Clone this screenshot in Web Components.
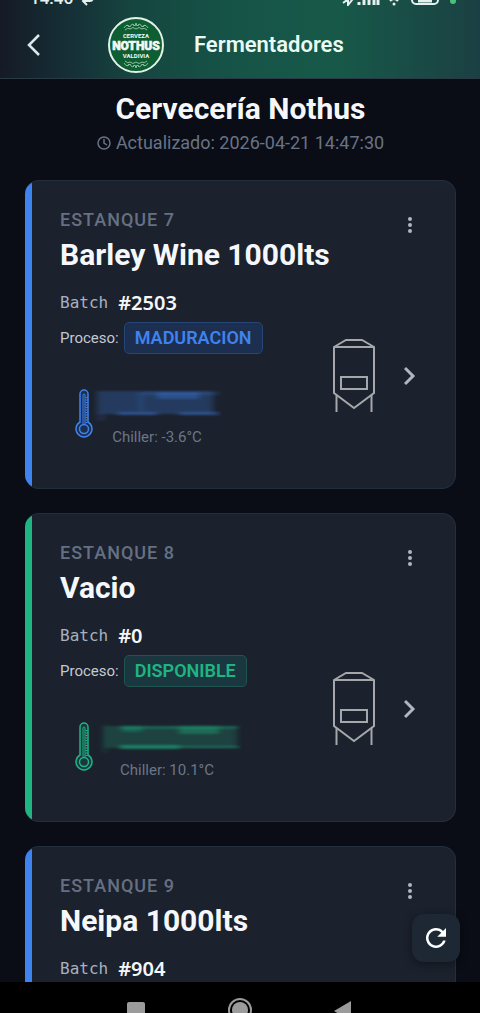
<!DOCTYPE html>
<html lang="es">
<head>
<meta charset="utf-8">
<meta name="viewport" content="width=device-width, initial-scale=1">
<title>Fermentadores</title>
<style>
html, body {
	margin: 0;
	height: 100%;
}
body {
	background: #0a0d15;
	color: #f5f7fa;
	font-family: Roboto, "Liberation Sans", sans-serif;
}
</style>
</head>
<body>
<app-shell>
	<app-header slot='top'>Fermentadores</app-header>
	<page-heading updated='2026-04-21 14:47:30'>Cervecería Nothus</page-heading>
	<tank-card tank='7' batch='2503' process='MADURACION' color='blue' chiller='-3.6°C'>Barley Wine 1000lts</tank-card>
	<tank-card tank='8' batch='0' process='DISPONIBLE' color='green' chiller='10.1°C'>Vacio</tank-card>
	<tank-card tank='9' batch='904' color='blue'>Neipa 1000lts</tank-card>
	<refresh-button slot='float'></refresh-button>
	<nav-bar slot='bottom'></nav-bar>
</app-shell>
<script>
/** NOTES:
 * accent colors come in through --accent, --accent-bg and --accent-line
 * they are set on the tank-card and reach the elements inside it
 * process and chiller are optional, a card without them keeps its height
 */
var buttonStyles = `
button, a {
	display: flex;
	align-items: center;
	justify-content: center;
	margin: 0;
	padding: 0;
	border: 0;
	background: none;
	color: inherit;
	cursor: pointer;
}
svg {
	display: block;
}
`
var accents = {
	blue: ['#3f83ee', '#1d2f50', '#254676'],
	green: ['#1fb582', '#1a3740', '#1f5450']
}
function render(el, styles, content) {
	var shadow = el.attachShadow({mode:'open'})
	shadow.innerHTML = `<style>${styles}</style>${content}`
	return shadow
}
class AppShell extends HTMLElement {
	connectedCallback() {
		render(this, `
:host {
	display: flex;
	flex-direction: column;
	height: 100vh;
}
#view {
	flex: 1;
	min-height: 0;
	position: relative;
}
main {
	box-sizing: border-box;
	height: 100%;
	overflow: hidden;
	display: flex;
	flex-direction: column;
	gap: 24px;
	padding: 12px 24px 0 25px;
}
#float {
	position: absolute;
	right: 20px;
	bottom: 20px;
}
`, `
<slot name='top'></slot>
<div id='view'>
	<main><slot></slot></main>
	<div id='float'><slot name='float'></slot></div>
</div>
<slot name='bottom'></slot>`)
	}
}
customElements.define('app-shell', AppShell)

class StatusBar extends HTMLElement {
	connectedCallback() {
		render(this, `
:host {
	display: flex;
	align-items: flex-end;
	justify-content: space-between;
	height: 6px;
	overflow: hidden;
	padding: 0 24px 4px 30px;
	color: #e6f0ee;
	font-size: 17px;
	font-weight: 500;
	line-height: 16px;
}
div {
	display: flex;
	align-items: flex-end;
	gap: 8px;
}
svg {
	display: block;
}
`, `
<div>
	<span>14:46</span>
	<svg width='14' height='16' viewBox='0 0 14 16' fill='none' stroke='currentColor' stroke-width='2'>
		<path d='M3 11 h6 q3 0 3 -4 M6 7 l-4 4 l4 4'/>
	</svg>
</div>
<div>
	<svg width='100' height='16' viewBox='0 0 100 16' fill='none' stroke='currentColor' stroke-width='2'>
		<path d='M2 3 l9 7 l-4 5 v-14 M2 13 l8 -6'/>
		<path d='M18 12 v3 M23 9 v6 M28 5 v10 M33 2 v13 M37 0 v15' stroke-width='3'/>
		<path d='M46 8 q7 -6 14 0 M49 11 q4 -4 8 0'/>
		<circle cx='53' cy='14' r='1.5' fill='currentColor' stroke='none'/>
		<rect x='71' y='0' width='26' height='14' rx='4' />
		<path d='M77 11 h14' stroke-width='3'/>
	</svg>
	<svg width='7' height='16' viewBox='0 0 7 16'><circle cx='4' cy='11' r='3' fill='#45c477'/></svg>
</div>`)
	}
}
customElements.define('status-bar', StatusBar)

class BrandLogo extends HTMLElement {
	connectedCallback() {
		render(this, `
:host {
	display: block;
	width: 56px;
	height: 56px;
}
text {
	fill: #f3f8f4;
	text-anchor: middle;
	font-weight: bold;
}
.small {
	font-size: 6px;
}
.name {
	font-size: 12px;
	font-weight: 900;
	stroke: #f3f8f4;
	stroke-width: .6px;
}
`, `
<svg width='56' height='56' viewBox='0 0 56 56' role='img' aria-label='Nothus'>
	<circle cx='28' cy='28' r='27' fill='#0d5e33' stroke='#e3f1e8' stroke-width='2'/>
	<g id='hops' fill='none' stroke='#8dbb9d' stroke-width='1'>
		<path d='M16 11 q3 -5 6 -1 q2 -5 5 -1 l1 -3 l1 3 q3 -4 5 1 q3 -4 6 1'/>
		<path d='M17 13 q3 -3 5 -1 q3 -3 6 0 q3 -3 6 0 q2 -2 5 1'/>
		<path d='M19 8 l2 2 M25 7 l1 2 M31 7 l-1 2 M37 8 l-2 2'/>
	</g>
	<use href='#hops' transform='matrix(1 0 0 -1 0 57)'/>
	<text class='small' x='28' y='21'>CERVEZA</text>
	<text class='name' x='28' y='33'>NOTHUS</text>
	<text class='small' x='28' y='41'>VALDIVIA</text>
</svg>`)
	}
}
customElements.define('brand-logo', BrandLogo)

class AppHeader extends HTMLElement {
	connectedCallback() {
		render(this, `
${buttonStyles}
:host {
	display: block;
	border-bottom: 1px solid #2a3b45;
	background: linear-gradient(to right, #151a26 0%, #153238 16%, #15463f 28%, #165448 50%, #175949 70%, #1b4043 100%);
}
header {
	display: flex;
	align-items: center;
	height: 66px;
	padding: 2px 18px 0;
}
button {
	width: 32px;
	height: 40px;
}
brand-logo {
	margin: 0 30px 0 58px;
}
#title {
	font-size: 22px;
	font-weight: 600;
	line-height: 28px;
	color: #e9fbf5;
}
`, `
<status-bar></status-bar>
<header>
	<button aria-label='Volver'>
		<svg width='24' height='24' viewBox='0 0 24 24' fill='none' stroke='#dfe7ee' stroke-width='2.500'><path d='M17 2 l-10 10 l10 10'/></svg>
	</button>
	<brand-logo></brand-logo>
	<span id='title'><slot></slot></span>
</header>`)
	}
}
customElements.define('app-header', AppHeader)

class PageHeading extends HTMLElement {
	connectedCallback() {
		render(this, `
:host {
	display: block;
	padding-bottom: 1px;
	text-align: center;
}
h1 {
	margin: 0;
	font-size: 30px;
	font-weight: bold;
	line-height: 36px;
}
p {
	display: flex;
	align-items: center;
	justify-content: center;
	gap: 5px;
	margin: 4px 0 0;
	font-size: 18px;
	line-height: 24px;
	color: #697386;
}
`, `
<h1><slot></slot></h1>
<p>
	<svg width='14' height='14' viewBox='0 0 14 14' fill='none' stroke='currentColor' stroke-width='1.500'>
		<circle cx='7' cy='7' r='6'/>
		<path d='M7 3 v4 l3 2'/>
	</svg>
	<span>Actualizado: ${this.getAttribute('updated')}</span>
</p>`)
	}
}
customElements.define('page-heading', PageHeading)

class ProcessBadge extends HTMLElement {
	connectedCallback() {
		render(this, `
:host {
	display: block;
	padding: 0 10px;
	border: 1px solid var(--accent-line);
	border-radius: 5px;
	background: var(--accent-bg);
	color: var(--accent);
	font-size: 18px;
	font-weight: 600;
	line-height: 30px;
}
`, `<slot></slot>`)
	}
}
customElements.define('process-badge', ProcessBadge)

class TempReading extends HTMLElement {
	connectedCallback() {
		// the tank temperature is masked, only the chiller one is readable
		var green = this.getAttribute('color') === 'green'
		var mask = green ? `
<svg width='148' height='46' viewBox='0 0 148 46'>
	<defs><filter id='soft'><feGaussianBlur stdDeviation='3 1'/></filter></defs>
	<g filter='url(#soft)' fill='var(--accent)'>
		<rect x='12' y='12' width='132' height='22' opacity='.22'/>
		<rect x='11' y='11' width='2' height='28' opacity='.3'/>
		<rect x='27' y='12' width='118' height='3' opacity='.3'/>
		<rect x='29' y='12' width='20' height='6' opacity='.3'/>
		<rect x='86' y='12' width='40' height='8' opacity='.35'/>
		<rect x='27' y='31' width='60' height='4' opacity='.55'/>
		<rect x='88' y='32' width='58' height='2' opacity='.4'/>
	</g>
</svg>` : `
<svg width='128' height='46' viewBox='0 0 128 46'>
	<defs><filter id='soft'><feGaussianBlur stdDeviation='3 1'/></filter></defs>
	<g filter='url(#soft)' fill='var(--accent)'>
		<rect x='4' y='10' width='116' height='23' opacity='.25'/>
		<rect x='4' y='32' width='8' height='8' opacity='.12'/>
		<rect x='46' y='11' width='80' height='3' opacity='.2'/>
		<rect x='64' y='11' width='42' height='7' opacity='.3'/>
		<rect x='24' y='31' width='40' height='3' opacity='.4'/>
		<rect x='86' y='31' width='40' height='3' opacity='.4'/>
		<rect x='46' y='13' width='4' height='17' opacity='.2'/>
	</g>
</svg>`
		render(this, `
:host {
	display: flex;
	align-items: center;
	color: var(--accent);
	padding-left: 15px;
}
#values {
	display: flex;
	flex-direction: column;
	align-items: center;
}
svg {
	display: block;
}
p {
	margin: 0;
	font-size: 15px;
	line-height: 20px;
	color: #6c7688;
}
`, `
<svg width='18' height='50' viewBox='0 0 18 50' fill='none' stroke='currentColor'>
	<path d='M5 33 V5 a4 4 0 0 1 8 0 V33 a8 8 0 1 1 -8 0 z' stroke-width='1.5' fill='var(--accent-bg)'/>
	<path d='M8 35 V6 a1 1 0 0 1 2 0 V35'/>
	<circle cx='9' cy='40' r='4.5' stroke-width='1.5'/>
	<path d='M11.5 8 V34' stroke-width='2' stroke-dasharray='1 1.5'/>
</svg>
<div id='values'>
	${mask}
	<p>Chiller: <slot></slot></p>
</div>`)
	}
}
customElements.define('temp-reading', TempReading)

class TankIcon extends HTMLElement {
	connectedCallback() {
		render(this, `
:host {
	display: block;
}
svg {
	display: block;
}
`, `
<svg width='44' height='76' viewBox='0 0 44 76' fill='none' stroke='#a6a7aa' stroke-width='2'>
	<path d='M2 9 L14 2 H30 L42 9 V55 L22 70 L2 55 z M2 9 H42'/>
	<rect x='9' y='39' width='26' height='12'/>
	<path d='M4.500 57 V74 M39.500 57 V74'/>
</svg>`)
	}
}
customElements.define('tank-icon', TankIcon)

class TankCard extends HTMLElement {
	connectedCallback() {
		var color = this.getAttribute('color')
		var process = this.getAttribute('process')
		var chiller = this.getAttribute('chiller')
		var accent = accents[color]
		render(this, `
${buttonStyles}
:host {
	--accent: ${accent[0]};
	--accent-bg: ${accent[1]};
	--accent-line: ${accent[2]};
	display: flex;
	flex-shrink: 0;
	overflow: hidden;
	border: 1px solid #242f3d;
	border-left: 0;
	border-radius: 14px;
	background: #1b212d;
}
#stripe {
	width: 7px;
	background: var(--accent);
}
article {
	flex: 1;
	padding: 27px 29px 27px 28px;
}
#top, #body {
	display: flex;
	justify-content: space-between;
}
#body {
	align-items: center;
	margin-top: 17px;
	min-height: 171px;
}
#tank {
	font-size: 18px;
	font-weight: 500;
	line-height: 24px;
	letter-spacing: 1px;
	color: #667083;
}
h2 {
	margin: 5px 0 0;
	font-size: 30px;
	font-weight: bold;
	line-height: 36px;
}
#menu {
	width: 32px;
	height: 34px;
	color: #b0b6c2;
}
#batch {
	display: flex;
	align-items: center;
	gap: 10px;
	height: 24px;
	font-size: 16px;
	font-family: "DejaVu Sans Mono", monospace;
	color: #a9b1c0;
}
#batch b {
	font-family: "Noto Sans", sans-serif;
	font-size: 20px;
	font-weight: 600;
	color: #f5f7fa;
}
#process {
	display: flex;
	align-items: center;
	gap: 5px;
	margin: 8px 0 27px;
	font-size: 15px;
	color: #c3c9d4;
}
#left {
	align-self: flex-start;
}
#right {
	display: flex;
	align-items: center;
	gap: 18px;
	color: #b0b6c2;
}
#right a {
	width: 32px;
	height: 40px;
}
`, `
<div id='stripe'></div>
<article>
	<div id='top'>
		<div>
			<div id='tank'>ESTANQUE ${this.getAttribute('tank')}</div>
			<h2><slot></slot></h2>
		</div>
		<button id='menu' aria-label='Opciones'>
			<svg width='6' height='18' viewBox='0 0 6 18' fill='currentColor'>
				<circle cx='3' cy='3' r='2'/><circle cx='3' cy='9' r='2'/><circle cx='3' cy='15' r='2'/>
			</svg>
		</button>
	</div>
	<div id='body'>
		<div id='left'>
			<div id='batch'><span>Batch</span><b>#${this.getAttribute('batch')}</b></div>
			${process ? `<div id='process'><span>Proceso:</span><process-badge>${process}</process-badge></div>` : ''}
			${chiller ? `<temp-reading color='${color}'>${chiller}</temp-reading>` : ''}
		</div>
		<div id='right'>
			<tank-icon></tank-icon>
			<a href='#' aria-label='Ver estanque'>
				<svg width='12' height='20' viewBox='0 0 12 20' fill='none' stroke='currentColor' stroke-width='3'><path d='M1 2 l8 8 l-8 8'/></svg>
			</a>
		</div>
	</div>
</article>`)
	}
}
customElements.define('tank-card', TankCard)

class RefreshButton extends HTMLElement {
	connectedCallback() {
		render(this, `
${buttonStyles}
:host {
	display: block;
}
button {
	width: 48px;
	height: 48px;
	border-radius: 12px;
	background: #1e2835;
	color: #fff;
	box-shadow: 0 2px 8px rgba(0, 0, 0, .4);
}
`, `
<button aria-label='Actualizar'>
	<svg width='30' height='30' viewBox='0 0 24 24' fill='currentColor'>
		<path d='M17.650 6.350 A8 8 0 1 0 19.730 14 h-2.080 A6 6 0 1 1 12 6 c1.660 0 3.140 .69 4.220 1.780 L13 11 h7 V4 z'/>
	</svg>
</button>`)
	}
}
customElements.define('refresh-button', RefreshButton)

class NavBar extends HTMLElement {
	connectedCallback() {
		render(this, `
${buttonStyles}
:host {
	display: block;
	background: #000;
	color: #9b9b9b;
}
nav {
	display: flex;
	justify-content: center;
	gap: 80px;
	height: 15px;
	padding-top: 16px;
	overflow: hidden;
}
button {
	width: 24px;
	height: 24px;
}
`, `
<nav>
	<button aria-label='Recientes'>
		<svg width='24' height='24' viewBox='0 0 24 24' fill='currentColor'><rect x='3' y='4' width='18' height='18' rx='2'/></svg>
	</button>
	<button aria-label='Inicio'>
		<svg width='24' height='24' viewBox='0 0 24 24'>
			<circle cx='12' cy='12' r='11' fill='none' stroke='currentColor' stroke-width='2'/>
			<circle cx='12' cy='12' r='8' fill='currentColor'/>
		</svg>
	</button>
	<button aria-label='Atrás'>
		<svg width='24' height='24' viewBox='0 0 24 24' fill='currentColor'><path d='M19 3 V23 L2 13 z'/></svg>
	</button>
</nav>`)
	}
}
customElements.define('nav-bar', NavBar)
</script>
</body>
</html>
